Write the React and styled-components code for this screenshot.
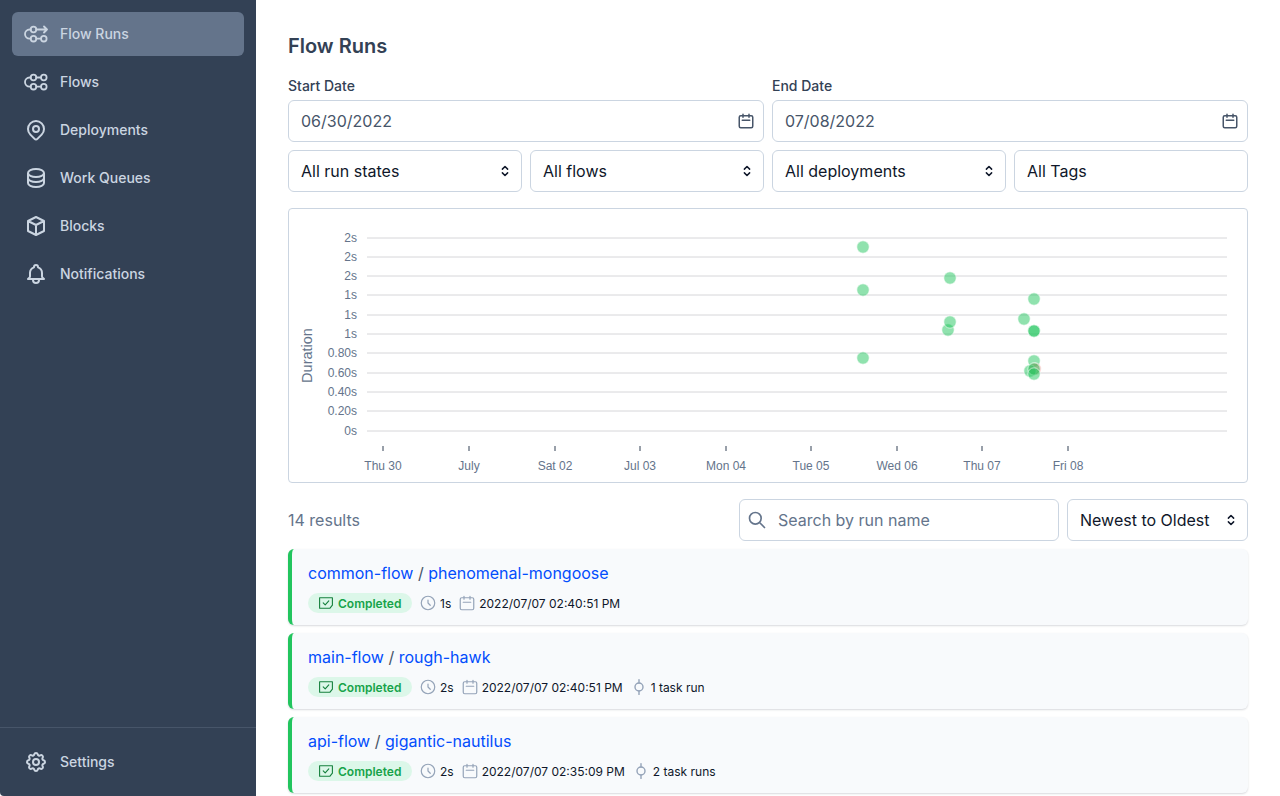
import React from 'react';
import styled, { createGlobalStyle } from 'styled-components';

const GlobalStyle = createGlobalStyle`
  html, body {
    margin: 0;
    height: 100%;
    overflow: hidden;
    background: #fff;
    font-family: Inter, "Noto Sans", sans-serif;
    color: #0f172a;
  }
`;

const Layout = styled.div`
  display: flex;
  height: 796px;
  overflow: hidden;
`;

const Sidebar = styled.aside`
  width: 256px;
  flex: none;
  display: flex;
  flex-direction: column;
  background: #334155;
  border-bottom-left-radius: 4px;
`;

const NavList = styled.nav`
  flex: 1;
  display: flex;
  flex-direction: column;
  gap: 4px;
  padding: 12px;
`;

const NavFooter = styled.div`
  border-top: 1px solid #475569;
  padding: 12px;
  height: 69px;
  box-sizing: border-box;
`;

const NavItem = styled.a`
  display: flex;
  align-items: center;
  gap: 12px;
  height: 44px;
  padding: 0 12px;
  border-radius: 6px;
  font-size: 14px;
  font-weight: 500;
  color: #cbd5e1;
  background: ${(p) => (p.$active ? '#64748b' : 'transparent')};

  svg {
    flex: none;
    color: #cbd5e1;
  }
`;

const NavLabel = styled.span`
  padding-bottom: 2px;
`;

const Main = styled.main`
  flex: 1;
  min-width: 0;
  padding: 32px 32px 0;
  display: flex;
  flex-direction: column;
`;

const Title = styled.h1`
  margin: 0;
  font-size: 20px;
  line-height: 28px;
  font-weight: 600;
  color: #334155;
`;

const DateRow = styled.div`
  display: grid;
  grid-template-columns: 1fr 1fr;
  gap: 8px;
  margin-top: 16px;
`;

const FilterRow = styled.div`
  display: grid;
  grid-template-columns: repeat(4, 1fr);
  gap: 8px;
  margin-top: 8px;
`;

const Field = styled.label`
  display: flex;
  flex-direction: column;
  gap: 4px;
`;

const FieldLabel = styled.span`
  font-size: 14px;
  line-height: 20px;
  font-weight: 500;
  color: #334155;
`;

const Control = styled.div`
  display: flex;
  align-items: center;
  justify-content: space-between;
  gap: 8px;
  box-sizing: border-box;
  height: 42px;
  padding: 0 ${(p) => (p.$date ? '8px' : '7px')} 0 12px;
  border: 1px solid #cbd5e1;
  border-radius: 6px;
  background: #fff;
  font-size: 16px;
  color: ${(p) => (p.$muted ? '#475569' : '#0f172a')};

  svg {
    flex: none;
    color: ${(p) => (p.$muted ? '#475569' : '#0f172a')};
  }
`;

const ChartCard = styled.section`
  margin-top: 16px;
  height: 275px;
  box-sizing: border-box;
  border: 1px solid #cbd5e1;
  border-radius: 4px;
  line-height: 0;
`;

const ResultsBar = styled.div`
  display: flex;
  align-items: center;
  margin-top: 16px;
  gap: 8px;
`;

const ResultCount = styled.span`
  flex: 1;
  font-size: 16px;
  color: #64748b;
`;

const SearchBox = styled(Control)`
  width: 320px;
  justify-content: flex-start;
  gap: 11px;
  padding-left: 7px;
  color: #64748b;

  svg {
    color: #64748b;
  }
`;

const SortBox = styled(Control)`
  width: 181px;
`;

const RunList = styled.div`
  display: flex;
  flex-direction: column;
  gap: 8px;
  margin-top: 8px;
`;

const RunCard = styled.article`
  flex: none;
  height: 76px;
  box-sizing: border-box;
  padding: 13px 16px 0;
  border-left: 4px solid #22c55e;
  border-radius: 6px;
  background: #f8fafc;
  box-shadow: 0 1px 2px rgba(15, 23, 42, 0.16);
`;

const RunTitle = styled.div`
  font-size: 16px;
  line-height: 22px;
  color: #475569;
`;

const RunLink = styled.a`
  color: #024dfd;
`;

const RunMeta = styled.div`
  display: flex;
  align-items: center;
  margin-top: 9px;
  height: 20px;
  font-size: 12px;
  color: #0f172a;
`;

const StateBadge = styled.span`
  display: inline-flex;
  align-items: center;
  gap: 5px;
  box-sizing: border-box;
  width: 104px;
  height: 20px;
  padding-left: 11px;
  border-radius: 10px;
  background: #dcf7e9;
  font-weight: 600;
  color: #16a34a;
`;

const MetaItem = styled.span`
  display: inline-flex;
  align-items: center;
  gap: 3px;
  margin-left: 7px;

  svg {
    flex: none;
    color: #94a3b8;
  }
`;

const ICONS = {
  pin: 'M17.657 16.657L13.414 20.9a1.998 1.998 0 01-2.827 0l-4.244-4.243a8 8 0 1111.314 0zM15 11a3 3 0 11-6 0 3 3 0 016 0z',
  database: 'M4 7v10c0 2.21 3.582 4 8 4s8-1.79 8-4V7M4 7c0 2.21 3.582 4 8 4s8-1.79 8-4M4 7c0-2.21 3.582-4 8-4s8 1.79 8 4m0 5c0 2.21-3.582 4-8 4s-8-1.79-8-4',
  cube: 'M20 7l-8-4-8 4m16 0l-8 4m8-4v10l-8 4m0-10L4 7m8 4v10M4 7v10l8 4',
  bell: 'M15 17h5l-1.405-1.405A2.032 2.032 0 0118 14.158V11a6.002 6.002 0 00-4-5.659V5a2 2 0 10-4 0v.341C7.67 6.165 6 8.388 6 11v3.159c0 .538-.214 1.055-.595 1.436L4 17h5m6 0v1a3 3 0 11-6 0v-1m6 0H9',
  cog: 'M10.325 4.317c.426-1.756 2.924-1.756 3.35 0a1.724 1.724 0 002.573 1.066c1.543-.94 3.31.826 2.37 2.37a1.724 1.724 0 001.065 2.572c1.756.426 1.756 2.924 0 3.35a1.724 1.724 0 00-1.066 2.573c.94 1.543-.826 3.31-2.37 2.37a1.724 1.724 0 00-2.572 1.065c-.426 1.756-2.924 1.756-3.35 0a1.724 1.724 0 00-2.573-1.066c-1.543.94-3.31-.826-2.37-2.37a1.724 1.724 0 00-1.065-2.572c-1.756-.426-1.756-2.924 0-3.35a1.724 1.724 0 001.066-2.573c-.94-1.543.826-3.31 2.37-2.37.996.608 2.296.07 2.572-1.065zM15 12a3 3 0 11-6 0 3 3 0 016 0z',
  calendar: 'M8 7V3m8 4V3m-9 8h10M5 21h14a2 2 0 002-2V7a2 2 0 00-2-2H5a2 2 0 00-2 2v12a2 2 0 002 2z',
  clock: 'M12 8v4l3 3m6-3a9 9 0 11-18 0 9 9 0 0118 0z',
  search: 'M21 21l-6-6m2-5a7 7 0 11-14 0 7 7 0 0114 0z',
  selector: 'M8.5 9.5l3.5-3.5 3.5 3.5m0 5l-3.5 3.5-3.5-3.5',
};

const Icon = ({ name, size = 24, weight = 2 }) => (
  <svg width={size} height={size} viewBox="0 0 24 24" fill="none" stroke="currentColor" strokeWidth={weight} strokeLinecap="round" strokeLinejoin="round">
    <path d={ICONS[name]} />
  </svg>
);

const FlowsIcon = () => (
  <svg width="24" height="24" viewBox="0 0 24 24" fill="none" stroke="currentColor" strokeWidth="1.8" strokeLinecap="round">
    <circle cx="9.5" cy="7.5" r="2.8" />
    <circle cx="19.8" cy="7.5" r="2.8" />
    <circle cx="9.5" cy="16.7" r="2.8" />
    <circle cx="19.8" cy="16.7" r="2.8" />
    <path d="M12.3 7.5h4.7M12.3 16.7h4.7M6.7 7.5H5.6a4.6 4.6 0 0 0 0 9.2h1.1" />
  </svg>
);

const FlowRunsIcon = () => (
  <svg width="24" height="24" viewBox="0 0 24 24" fill="none" stroke="currentColor" strokeWidth="1.8" strokeLinecap="round" strokeLinejoin="round">
    <circle cx="9.5" cy="7.5" r="2.8" />
    <circle cx="9.5" cy="16.7" r="2.8" />
    <circle cx="19.8" cy="16.7" r="2.8" />
    <path d="M12.3 7.5h10.7M20 4.5l3 3-3 3M12.3 16.7h4.7M6.7 7.5H5.6a4.6 4.6 0 0 0 0 9.2h1.1" />
  </svg>
);

const CompletedIcon = () => (
  <svg width="14" height="12" viewBox="0 0 14 12" fill="none" stroke="#15803d" strokeWidth="1.1" strokeLinecap="round" strokeLinejoin="round">
    <path d="M.6.8h12.8v7.4l-2.4 3H.6z" />
    <path d="M4.2 5.9l2 2 3.6-4" />
  </svg>
);

const TaskIcon = () => (
  <svg width="18" height="18" viewBox="0 0 18 18" fill="none" stroke="currentColor" strokeWidth="1.4" strokeLinecap="round">
    <circle cx="9" cy="9" r="4" />
    <path d="M9 1.6V5M9 13v3.4" />
  </svg>
);

const yTicks = [
  ['2s', 238], ['2s', 257], ['2s', 276], ['1s', 295], ['1s', 315], ['1s', 334],
  ['0.80s', 353], ['0.60s', 373], ['0.40s', 392], ['0.20s', 411], ['0s', 431],
];

const xTicks = [
  ['Thu 30', 383], ['July', 469], ['Sat 02', 555], ['Jul 03', 640], ['Mon 04', 726],
  ['Tue 05', 811], ['Wed 06', 897], ['Thu 07', 982], ['Fri 08', 1068],
];

const dots = [
  [863, 247], [863, 290], [863, 358], [950, 278], [948, 330], [950, 322],
  [1034, 299], [1024, 319], [1034, 331], [1034, 331], [1034, 361],
  [1035, 369, '#f87171'], [1030, 371], [1034, 369], [1034, 374],
];

const DurationChart = () => (
  <svg width="958" height="273" viewBox="289 209 958 273" fontFamily="'Liberation Sans', Arial, sans-serif">
    {yTicks.map(([label, y]) => (
      <g key={y}>
        <line x1="367" x2="1227" y1={y} y2={y} stroke="#d6d6d9" strokeWidth="1" />
        <text x="357" y={y + 4} textAnchor="end" fontSize="12" fill="#64748b">{label}</text>
      </g>
    ))}
    {xTicks.map(([label, x]) => (
      <g key={x}>
        <line x1={x} x2={x} y1="446" y2="451" stroke="#334155" strokeWidth="1" />
        <text x={x} y="470" textAnchor="middle" fontSize="12" fill="#64748b">{label}</text>
      </g>
    ))}
    <text x="312" y="355.5" textAnchor="middle" fontSize="14.5" fill="#64748b" transform="rotate(-90 312 355.5)">Duration</text>
    {dots.map(([x, y, color], i) => (
      <circle key={i} cx={x} cy={y} r="6.2" fill={color || '#22c55e'} fillOpacity="0.5" stroke="#fff" strokeOpacity="0.6" strokeWidth="1" />
    ))}
  </svg>
);

const runs = [
  { flow: 'common-flow', name: 'phenomenal-mongoose', duration: '1s', date: '2022/07/07 02:40:51 PM' },
  { flow: 'main-flow', name: 'rough-hawk', duration: '2s', date: '2022/07/07 02:40:51 PM', tasks: '1 task run' },
  { flow: 'api-flow', name: 'gigantic-nautilus', duration: '2s', date: '2022/07/07 02:35:09 PM', tasks: '2 task runs' },
];

const App = () => (
  <>
    <GlobalStyle />
    <Layout>
      <Sidebar>
        <NavList>
          <NavItem $active><FlowRunsIcon /><NavLabel>Flow Runs</NavLabel></NavItem>
          <NavItem><FlowsIcon /><NavLabel>Flows</NavLabel></NavItem>
          <NavItem><Icon name="pin" /><NavLabel>Deployments</NavLabel></NavItem>
          <NavItem><Icon name="database" /><NavLabel>Work Queues</NavLabel></NavItem>
          <NavItem><Icon name="cube" /><NavLabel>Blocks</NavLabel></NavItem>
          <NavItem><Icon name="bell" /><NavLabel>Notifications</NavLabel></NavItem>
        </NavList>
        <NavFooter>
          <NavItem><Icon name="cog" /><NavLabel>Settings</NavLabel></NavItem>
        </NavFooter>
      </Sidebar>
      <Main>
        <Title>Flow Runs</Title>
        <DateRow>
          <Field>
            <FieldLabel>Start Date</FieldLabel>
            <Control $date $muted>06/30/2022<Icon name="calendar" size={18} /></Control>
          </Field>
          <Field>
            <FieldLabel>End Date</FieldLabel>
            <Control $date $muted>07/08/2022<Icon name="calendar" size={18} /></Control>
          </Field>
        </DateRow>
        <FilterRow>
          <Control>All run states<Icon name="selector" size={18} /></Control>
          <Control>All flows<Icon name="selector" size={18} /></Control>
          <Control>All deployments<Icon name="selector" size={18} /></Control>
          <Control>All Tags</Control>
        </FilterRow>
        <ChartCard><DurationChart /></ChartCard>
        <ResultsBar>
          <ResultCount>14 results</ResultCount>
          <SearchBox><Icon name="search" size={20} />Search by run name</SearchBox>
          <SortBox>Newest to Oldest<Icon name="selector" size={18} /></SortBox>
        </ResultsBar>
        <RunList>
          {runs.map((run) => (
            <RunCard key={run.name}>
              <RunTitle><RunLink>{run.flow}</RunLink> / <RunLink>{run.name}</RunLink></RunTitle>
              <RunMeta>
                <StateBadge><CompletedIcon />Completed</StateBadge>
                <MetaItem><Icon name="clock" size={18} weight={1.6} />{run.duration}</MetaItem>
                <MetaItem><Icon name="calendar" size={18} weight={1.6} />{run.date}</MetaItem>
                {run.tasks && <MetaItem><TaskIcon />{run.tasks}</MetaItem>}
              </RunMeta>
            </RunCard>
          ))}
        </RunList>
      </Main>
    </Layout>
  </>
);

export default App;
